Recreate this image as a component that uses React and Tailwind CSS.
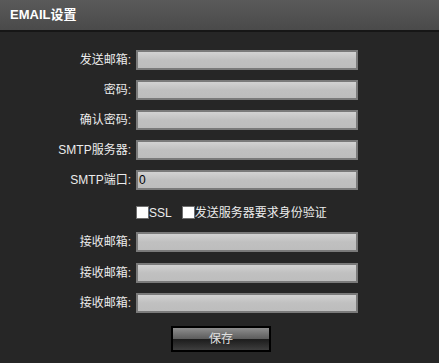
import React from 'react';

const font = { fontFamily: '"Liberation Sans", "Noto Sans CJK SC", sans-serif' };

const Field = ({ label, value = '', className = '' }) => (
  <div className={`flex items-center h-[20px] ${className}`}>
    <label className="w-[132px] text-right text-[12px] text-[#ececec] leading-none pr-[1px]">{label}:</label>
    <div className="ml-[4px] w-[222px] h-[20px] border-2 border-[#7a7a7a] bg-gradient-to-b from-[#d2d2d2] via-[#c0c0c0] to-[#bdbdbd] flex items-center px-[1px] text-[12px] text-black">
      {value}
    </div>
  </div>
);

const Check = ({ children }) => (
  <span className="flex items-center">
    <span className="w-[13px] h-[13px] bg-white border border-[#6e6e6e]" />
    <span className="text-[12px] text-[#ececec] leading-none">{children}</span>
  </span>
);

export default function App() {
  return (
    <div className="w-[439px] h-[363px] bg-[#262626] overflow-hidden" style={font}>
      <div className="h-[32px] bg-gradient-to-b from-[#5a5a5a] to-[#4a4a4a] border-b-2 border-[#161616] flex items-center pl-[10px]">
        <span className="text-white font-bold text-[13px]">EMAIL设置</span>
      </div>
      <div className="pt-[18px]">
        <Field label="发送邮箱" />
        <Field label="密码" className="mt-[10px]" />
        <Field label="确认密码" className="mt-[10px]" />
        <Field label="SMTP服务器" className="mt-[10px]" />
        <Field label="SMTP端口" value="0" className="mt-[10px]" />
        <div className="flex items-center gap-[10px] ml-[136px] mt-[16px] h-[13px]">
          <Check>SSL</Check>
          <Check>发送服务器要求身份验证</Check>
        </div>
        <Field label="接收邮箱" className="mt-[13px]" />
        <Field label="接收邮箱" className="mt-[11px]" />
        <Field label="接收邮箱" className="mt-[10px]" />
        <div className="flex mt-[13px] ml-[171px]">
          <button className="w-[100px] h-[26px] border-2 border-black flex flex-col overflow-hidden relative">
            <span className="h-1/2 w-full bg-gradient-to-b from-[#8e8e8e] to-[#5c5c5c]" />
            <span className="h-1/2 w-full bg-gradient-to-b from-[#1c1c1c] to-[#3e3e3e]" />
            <span className="absolute inset-0 flex items-center justify-center text-[12px] text-[#e0e0e0]">保存</span>
          </button>
        </div>
      </div>
    </div>
  );
}
